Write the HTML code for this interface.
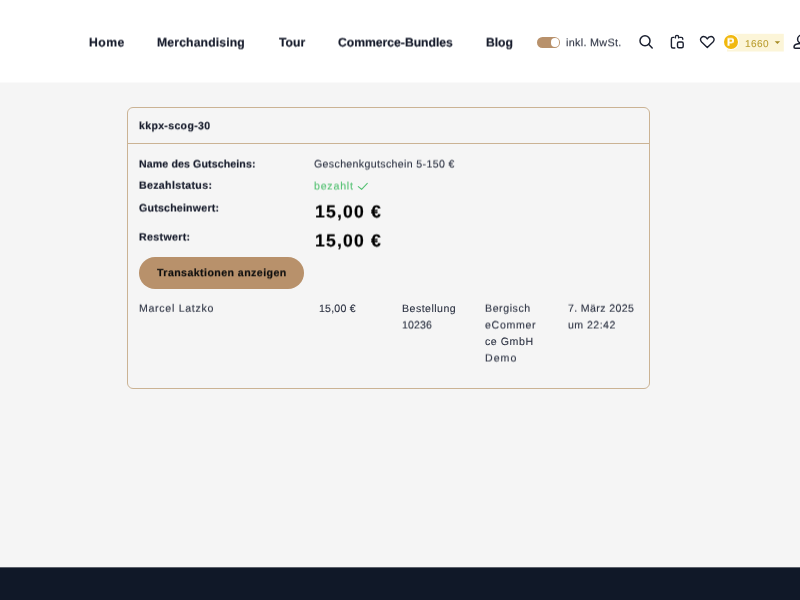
<!DOCTYPE html>
<html lang="de"><head><meta charset="utf-8"><title>Gutschein</title>
<style>
*{box-sizing:border-box;margin:0;padding:0}
html,body{width:800px;height:600px;overflow:hidden;background:#f5f5f5;font-family:"Liberation Sans",sans-serif;color:#1b2030;text-rendering:geometricPrecision}
.hdr{position:absolute;left:0;top:0;width:800px;height:82px;background:#fff}
.card{position:absolute;left:127px;top:107px;width:523px;height:282px;border:1px solid #cbb394;border-radius:6px}
.card .hd{position:absolute;left:0;top:0;width:100%;height:36px;border-bottom:1px solid #cbb394}
.t{position:absolute;white-space:nowrap;line-height:20px;will-change:transform}
.btn{position:absolute;left:139px;top:257px;width:165px;height:32px;border-radius:16px;background:#b8916b}
.ftr{position:absolute;left:0;top:568px;width:800px;height:32px;background:#101828}
.abs{position:absolute}
</style></head><body>
<div class="hdr"></div>
<div class="abs" style="left:0;top:82px;width:800px;height:1px;background:#fafafa"></div>
<!-- toggle -->
<div class="abs" style="left:537px;top:36.500px;width:23px;height:11.500px;border-radius:6px;background:#b8916b"></div>
<div class="abs" style="left:550.500px;top:38px;width:8.500px;height:8.500px;border-radius:50%;background:#fff"></div>
<!-- search -->
<svg class="abs" style="left:632px;top:30px" width="28" height="24" viewBox="0 0 28 24" fill="none" stroke="#1b2030" stroke-width="1.500" stroke-linecap="round"><circle cx="13" cy="10.700" r="5"/><path d="M16.600 14.300L20.200 18"/></svg>
<!-- clipboard -->
<svg class="abs" style="left:664px;top:30px" width="28" height="24" viewBox="0 0 28 24" fill="none" stroke="#1b2030" stroke-width="1.400" stroke-linecap="round" stroke-linejoin="round"><path d="M9.800 7.400H8.900A1.500 1.500 0 0 0 7.400 8.900V16.500A1.500 1.500 0 0 0 8.900 18H10.800"/><path d="M11.400 7.900V7A1.600 1.600 0 0 1 14.600 7V7.900"/><path d="M15.800 7.400H17.300A1.500 1.500 0 0 1 18.800 8.900V9.200"/><rect x="13.500" y="12" width="5.700" height="5.700" rx="1.500"/></svg>
<!-- heart -->
<svg class="abs" style="left:694px;top:30px" width="28" height="24" viewBox="0 0 28 24" fill="none" stroke="#1b2030" stroke-width="1.400" stroke-linejoin="round"><path d="M13.300 8.900C12.600 7.600 11.200 6.500 9.600 6.500C7.900 6.500 6.500 7.900 6.500 9.600C6.500 10.700 7 11.500 7.600 12.100L13.300 17.500L19 12.100C19.600 11.500 20.100 10.700 20.100 9.600C20.100 7.900 18.700 6.500 17 6.500C15.400 6.500 14 7.600 13.300 8.900Z"/></svg>
<!-- points badge -->
<svg class="abs" style="left:720px;top:30px" width="70" height="26" viewBox="0 0 70 26"><rect x="7" y="3.800" width="56.800" height="17.700" fill="#fcf5d8"/></svg>
<div class="abs" style="left:723px;top:34px;width:16px;height:16px;border-radius:50%;background:#fff"></div>
<div class="abs" style="left:724.100px;top:35.100px;width:13.800px;height:13.800px;border-radius:50%;background:#f1b80e"></div>
<svg class="abs" style="left:770px;top:36px" width="14" height="12" viewBox="0 0 14 12"><path d="M4.700 5.300H10.100L7.400 8.100Z" fill="#a68b24"/></svg>
<!-- user -->
<svg class="abs" style="left:772px;top:30px" width="40" height="24" viewBox="0 0 40 24" fill="none" stroke="#1b2030" stroke-width="1.500" stroke-linejoin="round"><circle cx="29.500" cy="9.200" r="3.900"/><path d="M29.500 13.600C25 13.600 22 15 22 17C22 17.800 22.500 18.200 23.200 18.200H35.800C36.500 18.200 37 17.800 37 17C37 15 34 13.600 29.500 13.600Z"/></svg>

<div class="card"><div class="hd"></div></div>
<div class="btn"></div>
<svg class="abs" style="left:355px;top:180px" width="16" height="12" viewBox="0 0 16 12" fill="none" stroke="#55c173" stroke-width="1.100" stroke-linecap="round" stroke-linejoin="round"><path d="M3.300 6.600L6.600 9.300 12.300 3.400"/></svg>
<div class="t" style="left:88.89px;top:32px;font-size:12.2px;font-weight:bold;-webkit-text-stroke:0.18px #171c2c;color:#171c2c;letter-spacing:0.443px;transform:matrix(1,0.0005,0,1,0,0.5)">Home</div>
<div class="t" style="left:157.39px;top:32px;font-size:12.2px;font-weight:bold;-webkit-text-stroke:0.18px #171c2c;color:#171c2c;letter-spacing:0.151px;transform:matrix(1,0.0005,0,1,0,0.5)">Merchandising</div>
<div class="t" style="left:278.64px;top:32px;font-size:12.2px;font-weight:bold;-webkit-text-stroke:0.18px #171c2c;color:#171c2c;letter-spacing:0.046px;transform:matrix(1,0.0005,0,1,0,0.5)">Tour</div>
<div class="t" style="left:338.14px;top:32px;font-size:12.2px;font-weight:bold;-webkit-text-stroke:0.18px #171c2c;color:#171c2c;letter-spacing:-0.019px;transform:matrix(1,0.0005,0,1,0,0.5)">Commerce-Bundles</div>
<div class="t" style="left:486.29px;top:32px;font-size:12.2px;font-weight:bold;-webkit-text-stroke:0.18px #171c2c;color:#171c2c;letter-spacing:-0.043px;transform:matrix(1,0.0005,0,1,0,0.5)">Blog</div>
<div class="t" style="left:565.98px;top:33px;font-size:10.8px;-webkit-text-stroke:0.1px #2a3040;color:#2a3040;letter-spacing:0.306px;transform:matrix(1,0.0005,0,1,0,0.25)">inkl. MwSt.</div>
<div class="t" style="left:745.18px;top:35px;font-size:10.0px;-webkit-text-stroke:0.1px #bb9e30;color:#bb9e30;letter-spacing:0.45px;transform:matrix(1,0.0005,0,1,0,0.0)">1660</div>
<div class="t" style="left:727.16px;top:32px;font-size:11px;font-weight:bold;-webkit-text-stroke:0.18px #fff;color:#fff;letter-spacing:0px;transform:matrix(1,0.0005,0,1,0,0.75)">P</div>
<div class="t" style="left:139.06px;top:116px;font-size:10.5px;font-weight:bold;-webkit-text-stroke:0.18px #171c2c;color:#171c2c;letter-spacing:0.357px;transform:matrix(1,0.0005,0,1,0,0.25)">kkpx-scog-30</div>
<div class="t" style="left:139.09px;top:154px;font-size:10.6px;font-weight:bold;-webkit-text-stroke:0.18px #171c2c;color:#171c2c;letter-spacing:0.118px;transform:matrix(1,0.0005,0,1,0,0.5)">Name des Gutscheins:</div>
<div class="t" style="left:139.09px;top:175px;font-size:10.6px;font-weight:bold;-webkit-text-stroke:0.18px #171c2c;color:#171c2c;letter-spacing:0.338px;transform:matrix(1,0.0005,0,1,0,0.75)">Bezahlstatus:</div>
<div class="t" style="left:139.10px;top:198px;font-size:10.6px;font-weight:bold;-webkit-text-stroke:0.18px #171c2c;color:#171c2c;letter-spacing:0.223px;transform:matrix(1,0.0005,0,1,0,0.5)">Gutscheinwert:</div>
<div class="t" style="left:139.09px;top:227px;font-size:10.6px;font-weight:bold;-webkit-text-stroke:0.18px #171c2c;color:#171c2c;letter-spacing:0.355px;transform:matrix(1,0.0005,0,1,0,0.5)">Restwert:</div>
<div class="t" style="left:314.22px;top:154px;font-size:10.6px;-webkit-text-stroke:0.1px #2a3040;color:#2a3040;letter-spacing:0.35px;transform:matrix(1,0.0005,0,1,0,0.5)">Geschenkgutschein 5-150 €</div>
<div class="t" style="left:314.09px;top:176px;font-size:10.6px;-webkit-text-stroke:0.1px #55c173;color:#55c173;letter-spacing:0.794px;transform:matrix(1,0.0005,0,1,0,0.5)">bezahlt</div>
<div class="t" style="left:314.57px;top:201px;font-size:17.6px;font-weight:bold;-webkit-text-stroke:0.18px #000;color:#000;letter-spacing:1.187px;transform:matrix(1,0.0005,0,1,0,0.5)">15,00 €</div>
<div class="t" style="left:314.57px;top:230px;font-size:17.6px;font-weight:bold;-webkit-text-stroke:0.18px #000;color:#000;letter-spacing:1.187px;transform:matrix(1,0.0005,0,1,0,0.5)">15,00 €</div>
<div class="t" style="left:157.05px;top:263px;font-size:10.6px;font-weight:bold;-webkit-text-stroke:0.18px #0d0d0d;color:#0d0d0d;letter-spacing:0.435px;transform:matrix(1,0.0005,0,1,0,0.25)">Transaktionen anzeigen</div>
<div class="t" style="left:138.66px;top:298px;font-size:10.6px;-webkit-text-stroke:0.1px #2a3040;color:#2a3040;letter-spacing:0.704px;transform:matrix(1,0.0005,0,1,0,0.75)">Marcel Latzko</div>
<div class="t" style="left:318.93px;top:298px;font-size:10.6px;-webkit-text-stroke:0.1px #2a3040;color:#2a3040;letter-spacing:0.205px;transform:matrix(1,0.0005,0,1,0,1.0)">15,00 €</div>
<div class="t" style="left:402.15px;top:298px;font-size:10.6px;-webkit-text-stroke:0.1px #2a3040;color:#2a3040;letter-spacing:0.466px;transform:matrix(1,0.0005,0,1,0,1.0)">Bestellung</div>
<div class="t" style="left:402.33px;top:315px;font-size:10.6px;-webkit-text-stroke:0.1px #2a3040;color:#2a3040;letter-spacing:0.104px;transform:matrix(1,0.0005,0,1,0,0.5)">10236</div>
<div class="t" style="left:484.75px;top:298px;font-size:10.6px;-webkit-text-stroke:0.1px #2a3040;color:#2a3040;letter-spacing:0.571px;transform:matrix(1,0.0005,0,1,0,0.75)">Bergisch</div>
<div class="t" style="left:485.30px;top:315px;font-size:10.6px;-webkit-text-stroke:0.1px #2a3040;color:#2a3040;letter-spacing:0.673px;transform:matrix(1,0.0005,0,1,0,0.5)">eCommer</div>
<div class="t" style="left:485.30px;top:332px;font-size:10.6px;-webkit-text-stroke:0.1px #2a3040;color:#2a3040;letter-spacing:0.557px;transform:matrix(1,0.0005,0,1,0,0.0)">ce GmbH</div>
<div class="t" style="left:484.75px;top:348px;font-size:10.6px;-webkit-text-stroke:0.1px #2a3040;color:#2a3040;letter-spacing:1.003px;transform:matrix(1,0.0005,0,1,0,0.5)">Demo</div>
<div class="t" style="left:567.93px;top:298px;font-size:10.6px;-webkit-text-stroke:0.1px #2a3040;color:#2a3040;letter-spacing:0.362px;transform:matrix(1,0.0005,0,1,0,0.75)">7. März 2025</div>
<div class="t" style="left:568.01px;top:315px;font-size:10.6px;-webkit-text-stroke:0.1px #2a3040;color:#2a3040;letter-spacing:0.448px;transform:matrix(1,0.0005,0,1,0,0.5)">um 22:42</div>

<div class="abs" style="left:0;top:567px;width:800px;height:1px;background:#5d616b"></div>
<div class="ftr"></div>
</body></html>
